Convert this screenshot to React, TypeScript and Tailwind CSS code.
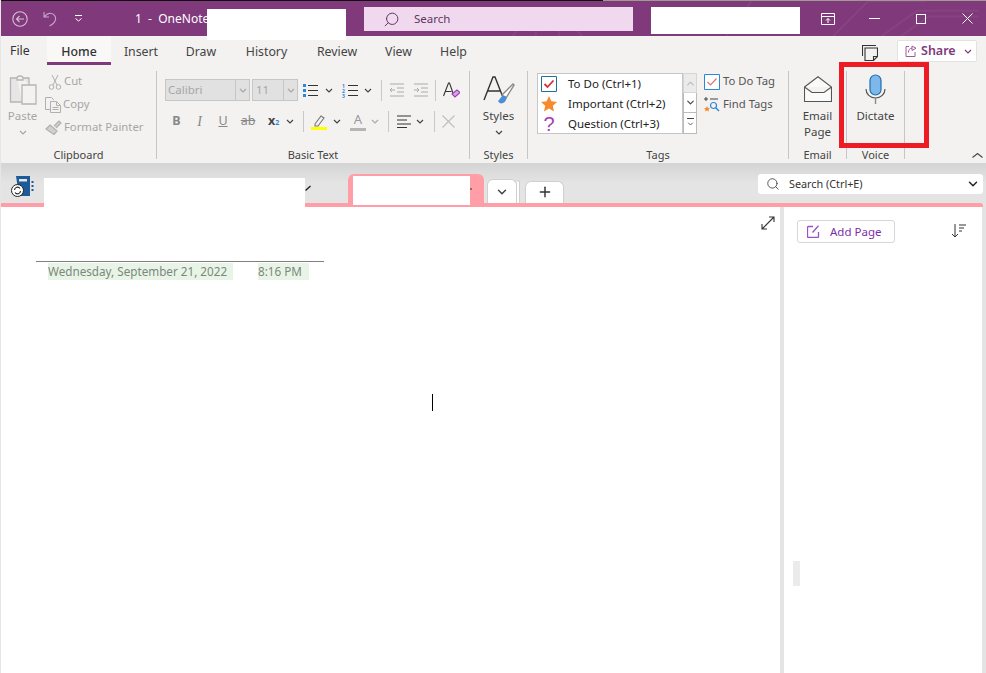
import { ChevronDown, ChevronUp, Search, Plus } from "lucide-react";

function Chev({ className = "" }: { className?: string }) {
  return (
    <svg viewBox="0 0 8 5" className={`w-[8px] h-[5px] shrink-0 ${className}`} fill="none" stroke="currentColor" strokeWidth="1.2">
      <path d="M1 1l3 3 3-3" />
    </svg>
  );
}

function Sep({ className = "" }: { className?: string }) {
  return <div className={`w-px h-[21px] bg-[#c8c8c8] shrink-0 ${className}`} />;
}

function Group({ label, width, children }: { label: string; width: string; children: React.ReactNode }) {
  return (
    <div className={`flex flex-col h-[88px] border-r border-[#c6c6c6] shrink-0 ${width}`}>
      <div className="flex-1 min-h-0">{children}</div>
      <div className="h-[14px] -mb-[3px] leading-[14px] text-center text-[11px] text-[#444]">{label}</div>
    </div>
  );
}

function SmallAction({ icon, label, iconClass, textClass = "text-[#a6a6a6]" }: { icon: React.ReactNode; label: string; iconClass: string; textClass?: string }) {
  return (
    <div className={`flex items-center h-[23px] text-[11.3px] whitespace-nowrap ${textClass}`}>
      <div className={iconClass}>{icon}</div>
      <span className="ml-[2px]">{label}</span>
    </div>
  );
}

export default function App() {
  return (
    <div className="relative w-[986px] h-[673px] overflow-hidden flex flex-col border-l border-[#e6e6e6] bg-white font-['Noto_Sans',sans-serif]">
      <div className="h-px shrink-0 flex">
        <div className="w-[602px] bg-[#111]" />
        <div className="flex-1 bg-[#a09a90]" />
      </div>
      {/* title bar */}
      <div className="relative h-[35px] shrink-0 flex items-center text-white bg-[#80397b]">
        <svg viewBox="0 0 500 36" className="absolute right-0 top-0 w-[500px] h-[35px]" fill="none" stroke="#874380" strokeWidth="2">
          <path d="M20 36l16-16h40l16 16M240 36l26-36M350 36l36-36h60M400 36l36-26h64M420 36l28-20h52" />
          <circle cx="56" cy="34" r="12" />
        </svg>
        <svg viewBox="0 0 16 16" className="relative w-[16px] h-[16px] ml-[11px]" fill="none" stroke="#d9bfd7" strokeWidth="1.1">
          <circle cx="8" cy="8" r="7.2" />
          <path d="M12 8H4.500M7.500 5L4.500 8l3 3" />
        </svg>
        <svg viewBox="0 0 14 16" className="relative w-[14px] h-[16px] ml-[15px]" fill="none" stroke="#c9a5c6" strokeWidth="1.1">
          <path d="M1 1v5h5M1.200 6C3 3.500 5 2 7.500 2.200 10.500 2.500 13 5 12.600 8.300 12.200 11 10 13 6.500 15" />
        </svg>
        <svg viewBox="0 0 9 7" className="relative w-[9px] h-[7px] ml-[17px]" fill="none" stroke="#fff" strokeWidth="1">
          <path d="M1 .5h7M1.500 3.500L4.500 6l3-2.500" />
        </svg>
        <div className="relative w-[72px] ml-[52px] text-[12px] whitespace-pre">1  -  OneNote</div>
        <div className="relative self-start mt-[8px] w-[139px] h-[31px] bg-white" />
        <div className="relative self-start mt-[6px] ml-[18px] w-[269px] h-[24px] flex items-center bg-[#f0d9ee] text-[#5e3a5c] text-[11.5px]">
          <Search className="w-[17px] h-[17px] ml-[19px] -scale-x-100" strokeWidth={1.4} />
          <span className="ml-[14px]">Search</span>
        </div>
        <div className="relative self-start mt-[6px] ml-[18px] w-[149px] h-[27px] bg-white" />
        <svg viewBox="0 0 14 12" className="relative w-[14px] h-[12px] ml-[21px]" fill="none" stroke="#fff" strokeWidth="1">
          <path d="M.5.5h13v11H.5zM.5 3.500h13M7 10V5.500M5 7.500l2-2 2 2" />
        </svg>
        <div className="relative w-[11px] h-px bg-white ml-[34px]" />
        <div className="relative w-[10px] h-[10px] border border-white ml-[36px]" />
        <svg viewBox="0 0 11 11" className="relative w-[11px] h-[11px] ml-[36px]" fill="none" stroke="#fff" strokeWidth="1">
          <path d="M.5.5l10 10M10.500.5l-10 10" />
        </svg>
      </div>

      {/* ribbon tabs */}
      <div className="h-[29px] shrink-0 flex bg-[#f3f2f1] text-[12.3px] text-[#444]">
        <div className="w-[46px] pl-[9px] pt-[6px] text-[#333]">File</div>
        <div className="w-[64px] text-center pt-[7px] bg-[#f9f8f7] border-b-[3px] border-[#80397b] font-medium text-[#333]">Home</div>
        <div className="w-[60px] text-center pt-[7px]">Insert</div>
        <div className="w-[60px] text-center pt-[7px]">Draw</div>
        <div className="w-[71px] text-center pt-[7px]">History</div>
        <div className="w-[70px] text-center pt-[7px]">Review</div>
        <div className="w-[53px] text-center pt-[7px]">View</div>
        <div className="w-[57px] text-center pt-[7px]">Help</div>
        <div className="flex-1" />
        <svg viewBox="0 0 16 16" className="w-[16px] h-[16px] mt-[9px]" fill="none" stroke="#333" strokeWidth="1.1">
          <path d="M.5 11V.5H14M3 3h12.500v8.500l-4 4H3zM11.500 15.500v-4h4" />
        </svg>
        <div className="ml-[19px] mr-[9px] mt-[4px] w-[80px] h-[22px] flex items-center bg-white border border-[#e2e2e2] rounded-[2px] text-[#80397b] text-[12.5px] font-semibold">
          <svg viewBox="0 0 12 12" className="w-[12px] h-[12px] ml-[7px]" fill="none" stroke="#a05a9b" strokeWidth="1">
            <path d="M4 1.500H1v10h9V7M7 1v4.500M7 1l4 2.200L7 5.500M7 3.200C4.500 3.200 3.500 5 3.500 7.500" />
          </svg>
          <span className="ml-[4px] pt-px">Share</span>
          <Chev className="ml-[8px] text-[#80397b]" />
        </div>
      </div>

      {/* ribbon */}
      <div className="h-[98px] shrink-0 flex pt-[6px] bg-[#f3f2f1]">
        <Group label="Clipboard" width="w-[156px]">
          <div className="flex">
            <div className="ml-[7px] w-[29px] mt-[4px] flex flex-col items-center text-[#a6a6a6]">
              <svg viewBox="0 0 28 30" className="w-[28px] h-[30px]" fill="none" stroke="#b5b5b5" strokeWidth="1.3">
                <path d="M8 3H1.500v24H13M20 10V3h-6" fill="#e6e6e6" />
                <path d="M8 3c0-1 1-2 3-2s3 1 3 2v2H8z" />
                <path d="M13 10h14v19H13z" fill="#f3f2f1" />
              </svg>
              <div className="mt-[5px] h-[12px] leading-[12px] text-[11.5px]">Paste</div>
              <Chev className="mt-[8px]" />
            </div>
            <div className="ml-[11px] -mt-px">
              <SmallAction
                label="Cut"
                iconClass="w-[14px]"
                icon={
                  <svg viewBox="0 0 14 16" className="w-[14px] h-[16px]" fill="none" stroke="#b0b0b0" strokeWidth="1">
                    <path d="M4 1l5 10M10 1L5 11" />
                    <circle cx="3.500" cy="13" r="2.300" />
                    <circle cx="10.500" cy="13" r="2.300" />
                  </svg>
                }
              />
              <SmallAction
                label="Copy"
                iconClass="w-[16px] -ml-[3px]"
                icon={
                  <svg viewBox="0 0 16 16" className="w-[16px] h-[16px]" fill="none" stroke="#b0b0b0" strokeWidth="1">
                    <path d="M5 12.500H.5V.5h6L9 3M5.500 4.500h6l4 4v7h-10zM11.500 4.500v4h4M7.500 10.500h6M7.500 12.500h6" />
                  </svg>
                }
              />
              <SmallAction
                label="Format Painter"
                iconClass="w-[17px] -ml-[3px]"
                icon={
                  <svg viewBox="0 0 17 15" className="w-[17px] h-[15px]" fill="none" stroke="#b0b0b0" strokeWidth="1.2">
                    <path d="M9 6l5-5 2 2-5 5M5 5l7 6-3 3.500-8-5.500z" fill="#d0d0d0" />
                  </svg>
                }
              />
            </div>
          </div>
        </Group>

        <Group label="Basic Text" width="w-[313px]">
          <div className="flex items-center mt-[8px] h-[22px] text-[#444]">
            <div className="ml-[8px] w-[85px] h-[22px] flex bg-[#e1e1e1] border border-[#c6c6c6] text-[#a6a6a6] text-[11.5px] leading-[20px]">
              <span className="flex-1 pl-[2px]">Calibri</span>
              <div className="w-[14px] border-l border-[#c6c6c6] flex items-center justify-center"><Chev /></div>
            </div>
            <div className="ml-[2px] w-[46px] h-[22px] flex bg-[#e1e1e1] border border-[#c6c6c6] text-[#a6a6a6] text-[11.5px] leading-[20px]">
              <span className="flex-1 pl-[3px]">11</span>
              <div className="w-[14px] border-l border-[#c6c6c6] flex items-center justify-center"><Chev /></div>
            </div>
            <svg viewBox="0 0 15 14" className="ml-[5px] w-[15px] h-[14px]" fill="none" stroke="#333" strokeWidth="1">
              <path d="M5 2.500h10M5 7.500h10M5 12.500h10" />
              <path d="M0 1h3v3H0zM0 6h3v3H0zM0 11h3v3H0z" fill="#2b88d8" stroke="none" />
            </svg>
            <Chev className="ml-[7px]" />
            <svg viewBox="0 0 17 15" className="ml-[8px] w-[17px] h-[15px]" fill="none" stroke="#333" strokeWidth="1">
              <path d="M7 2.500h10M7 7.500h10M7 12.500h10" />
              <text x="1" y="4.500" fontSize="5" fontWeight="700" fill="#2b88d8" stroke="none">1</text>
              <text x="1" y="9.500" fontSize="5" fontWeight="700" fill="#2b88d8" stroke="none">2</text>
              <text x="1" y="14.500" fontSize="5" fontWeight="700" fill="#2b88d8" stroke="none">3</text>
            </svg>
            <Chev className="ml-[6px]" />
            <Sep className="ml-[9px]" />
            <svg viewBox="0 0 15 14" className="ml-[7px] w-[15px] h-[14px]" fill="none" stroke="#aaa" strokeWidth="1">
              <path d="M1 1h14M8 5h7M8 9h7M1 13h14M6 7H1M3 5L1 7l2 2" />
            </svg>
            <svg viewBox="0 0 15 14" className="ml-[9px] w-[15px] h-[14px]" fill="none" stroke="#aaa" strokeWidth="1">
              <path d="M1 1h14M8 5h7M8 9h7M1 13h14M1 7h5M4 5l2 2-2 2" />
            </svg>
            <Sep className="ml-[7px]" />
            <svg viewBox="0 0 17 17" className="ml-[7px] w-[17px] h-[17px]" fill="none" strokeWidth="1.1">
              <path d="M.5 14L5.500 1h1L10 11M2.500 9.500h6" stroke="#333" />
              <path d="M9 12l5-4 3 2.500-5 4.500z" fill="#d9a6e5" stroke="#9b3fb5" />
            </svg>
          </div>
          <div className="flex items-center mt-[9px] h-[23px] text-[#888] text-[12.5px]">
            <div className="ml-[12px] w-[15px] text-center font-bold">B</div>
            <div className="ml-[8px] w-[15px] text-center italic font-['Liberation_Serif',serif] text-[14px]">I</div>
            <div className="ml-[8px] w-[16px] text-center underline">U</div>
            <div className="ml-[9px] w-[16px] text-center line-through">ab</div>
            <div className="ml-[12px] w-[10px] font-bold text-[#444] leading-none whitespace-nowrap">
              x<span className="text-[7px] text-[#2b88d8]">2</span>
            </div>
            <Chev className="ml-[8px] text-[#444]" />
            <Sep className="ml-[9px]" />
            <svg viewBox="0 0 16 16" className="ml-[7px] w-[16px] h-[16px]" fill="none" stroke="#777" strokeWidth="1.1">
              <path d="M4 10l6-8 3 2-6 8H4z" />
              <path d="M0 13h16v3H0z" fill="#ffff00" stroke="none" />
            </svg>
            <Chev className="ml-[6px] text-[#444]" />
            <div className="ml-[9px] w-[16px] h-[20px] flex flex-col items-center">
              <span className="h-[15px] leading-[15px] text-[13px] text-[#999]">A</span>
              <div className="w-[16px] h-[3px] mt-[1px] bg-[#b5b5b5]" />
            </div>
            <Chev className="ml-[5px] text-[#aaa]" />
            <Sep className="ml-[9px]" />
            <svg viewBox="0 0 14 13" className="ml-[8px] w-[14px] h-[13px]" fill="none" stroke="#333" strokeWidth="1">
              <path d="M0 1h14M0 5h10M0 9h14M0 12.500h10" />
            </svg>
            <Chev className="ml-[5px] text-[#444]" />
            <Sep className="ml-[10px]" />
            <svg viewBox="0 0 13 13" className="ml-[7px] w-[13px] h-[13px]" fill="none" stroke="#bdbdbd" strokeWidth="1.1">
              <path d="M.5.5l12 12M12.500.5l-12 12" />
            </svg>
          </div>
        </Group>

        <Group label="Styles" width="w-[58px]">
          <div className="flex flex-col items-center mt-[5px] text-[#444]">
            <svg viewBox="0 0 32 30" className="w-[32px] h-[30px] ml-[1px]" fill="none" strokeWidth="1.400">
              <path d="M1 24L10 1h2l9 23M5 15h12" stroke="#333" />
              <path d="M19 19L30 8l1 1-8 13z" stroke="#888" fill="#fff" />
              <path d="M15 25c2-1 3-6 7-5 3 1 1 6-2 7-2 1-4 0-5-2z" fill="#4a90d9" />
            </svg>
            <div className="mt-[4px] h-[12px] leading-[12px] text-[11.5px]">Styles</div>
            <Chev className="mt-[8px]" />
          </div>
        </Group>

        <Group label="Tags" width="w-[261px]">
          <div className="flex mt-[2px]">
            <div className="ml-[9px] w-[146px] h-[61px] bg-white border border-[#c6c6c6] text-[11.5px] text-[#222]">
              <div className="flex items-center h-[20px] pl-[3px]">
                <svg viewBox="0 0 16 16" className="w-[16px] h-[16px]" fill="none">
                  <path d="M.5.5h15v15H.5z" stroke="#1f6f9f" />
                  <path d="M3.500 8l3 3 6-6.500" stroke="#d13438" strokeWidth="1.800" />
                </svg>
                <span className="ml-[11px]">To Do (Ctrl+1)</span>
              </div>
              <div className="flex items-center h-[20px] pl-[3px]">
                <svg viewBox="0 0 16 16" className="w-[16px] h-[16px]">
                  <path d="M8 0l2.400 5.300 5.600.6-4.200 3.800 1.200 5.700L8 12.500l-5 2.900 1.200-5.700L0 5.900l5.600-.6z" fill="#f58b2c" />
                </svg>
                <span className="ml-[11px]">Important (Ctrl+2)</span>
              </div>
              <div className="flex items-center h-[19px] pl-[3px]">
                <span className="w-[16px] text-center text-[#a53bb5] text-[20px] font-['Liberation_Sans',sans-serif] font-light leading-none">?</span>
                <span className="ml-[11px]">Question (Ctrl+3)</span>
              </div>
            </div>
            <div className="w-[14px] h-[61px] flex flex-col text-[#444]">
              <div className="h-[20px] bg-[#ebebeb] border border-[#d6d6d6] flex items-center justify-center text-[#bbb]"><ChevronUp className="w-[11px] h-[11px]" strokeWidth={2.5} /></div>
              <div className="h-[20px] bg-white border-x border-[#bbb] border-b flex items-center justify-center"><ChevronDown className="w-[11px] h-[11px]" strokeWidth={2.5} /></div>
              <div className="h-[21px] bg-white border-x border-b border-[#bbb] flex flex-col items-center justify-center">
                <div className="w-[7px] h-px bg-[#444] mb-px" />
                <ChevronDown className="w-[11px] h-[8px]" strokeWidth={2.5} />
              </div>
            </div>
            <div className="ml-[7px] -mt-[3px]">
              <SmallAction
                label="To Do Tag"
                iconClass="w-[16px] mr-px"
                textClass="text-[#555]"
                icon={
                  <svg viewBox="0 0 16 16" className="w-[16px] h-[16px]" fill="none">
                    <path d="M.5.5h15v15H.5z" stroke="#2b88d8" fill="#fff" />
                    <path d="M3.500 8l3 3 6-6.500" stroke="#e8706f" strokeWidth="1.200" />
                  </svg>
                }
              />
              <SmallAction
                label="Find Tags"
                iconClass="w-[16px] mr-px"
                textClass="text-[#555]"
                icon={
                  <svg viewBox="0 0 16 16" className="w-[16px] h-[16px]" fill="none">
                    <path d="M1 1h2v2H1zM6 2h8" stroke="#444" />
                    <path d="M3 9l1 2h2l-1.500 1.500.5 2-2-1-2 1 .5-2L0 11h2z" fill="#f58b2c" />
                    <circle cx="9.500" cy="8.500" r="3" stroke="#2b88d8" strokeWidth="1.200" />
                    <path d="M12 11l3 3" stroke="#2b88d8" strokeWidth="1.400" />
                  </svg>
                }
              />
            </div>
          </div>
        </Group>

        <Group label="Email" width="w-[58px]">
          <div className="flex flex-col items-center mt-[5px] text-[#444] text-[11.5px] leading-[16px]">
            <svg viewBox="0 0 28 26" className="w-[28px] h-[26px]" fill="#fafafa" stroke="#555" strokeWidth="1.100">
              <path d="M.5 11L14 .8 27.500 11v14.500H.5zM.5 11l7.500 5.500h12L27.500 11" />
            </svg>
            <div className="mt-[6px]">Email</div>
            <div>Page</div>
          </div>
        </Group>

        <Group label="Voice" width="w-[58px]">
          <div className="flex flex-col items-center mt-[3px] text-[#444] text-[11.5px] leading-[16px]">
            <svg viewBox="0 0 21 30" className="w-[21px] h-[30px]" fill="none">
              <rect x="5" y="1" width="11" height="20" rx="5.500" fill="#7cb8ea" stroke="#1f6fb2" strokeWidth="1.200" />
              <path d="M1 15c0 5 4 9 9.500 9s9.500-4 9.500-9" stroke="#555" strokeWidth="1.200" />
              <path d="M10.500 24v6" stroke="#888" strokeWidth="1.400" />
            </svg>
            <div className="mt-[4px]">Dictate</div>
          </div>
        </Group>

        <div className="flex-1 flex justify-end items-end pr-[3px] pb-[5px]">
          <svg viewBox="0 0 11 5" className="w-[11px] h-[5px]" fill="none" stroke="#444" strokeWidth="1.100">
            <path d="M.5 4.500l5-4 5 4" />
          </svg>
        </div>
      </div>

      {/* section tabs */}
      <div className="shrink-0 bg-[#e4e4e4]">
        <div className="relative z-10 h-[40px] flex bg-gradient-to-b from-[#d4d4d4] via-[#e4e4e4] to-[#e4e4e4]">
          <svg viewBox="0 0 24 21" className="ml-[10px] mt-[13px] w-[24px] h-[21px]" fill="none">
            <path d="M5 0h14v20H8z" fill="#1d5a96" />
            <path d="M8 3h8v2.500H8z" fill="#dce8f3" />
            <path d="M20.500 5h2v2h-2zM20.500 9h2v2h-2zM20.500 13h2v2h-2z" fill="#1d5a96" />
            <circle cx="6.500" cy="14.500" r="6" fill="#fff" stroke="#222" />
            <path d="M3.500 14a3 3 0 0 1 5.500-1.500M9.500 15a3 3 0 0 1-5.500 1.500" stroke="#222" strokeWidth="1.100" />
          </svg>
          <div className="ml-[9px] mt-[15px] w-[261px] h-[29px] bg-white shrink-0" />
          <svg viewBox="0 0 6 6" className="mt-[22px] w-[6px] h-[6px]" fill="none" stroke="#222" strokeWidth="1.400">
            <path d="M0.500 5.500L5.500 1" />
          </svg>
          <div className="ml-[37px] mt-[11px] w-[136px] h-[33px] pl-[5px] pt-[2px] bg-[#ff9ea6] rounded-t-[6px] flex shrink-0">
            <div className="w-[117px] h-[29px] bg-white" />
            <div className="w-[2px] h-[2px] mt-[12px] bg-[#777]" />
          </div>
          <div className="ml-[3px] mt-[16px] w-[33px] h-[24px] flex">
            <div className="w-[31px] h-[24px] bg-white border border-b-0 border-[#d0d0d0] rounded-t-[6px] flex justify-center pt-[5px] text-[#444]">
              <ChevronDown className="w-[14px] h-[14px]" strokeWidth={2.5} />
            </div>
            <div className="w-[3px] h-[23px] mt-px bg-white border-r border-t border-[#d0d0d0] rounded-tr-[4px]" />
          </div>
          <div className="ml-[5px] mt-[18px] w-[39px] h-[22px] bg-white border border-b-0 border-[#d0d0d0] rounded-t-[6px] flex justify-center pt-[2px] text-[#333]">
            <Plus className="w-[16px] h-[16px]" strokeWidth={2.2} />
          </div>
          <div className="flex-1" />
          <div className="mr-[3px] mt-[11px] w-[225px] h-[20px] flex items-center bg-white rounded-[3px] text-[10.8px] text-[#333]">
            <Search className="w-[14px] h-[14px] ml-[8px] text-[#444]" strokeWidth={1.5} />
            <span className="ml-[9px]">Search (Ctrl+E)</span>
            <ChevronDown className="ml-auto mr-[3px] w-[14px] h-[14px] text-[#222]" strokeWidth={2.5} />
          </div>
        </div>
        <div className="h-[4px] mr-[3px] bg-[#ff9ea6] rounded-tr-[3px]" />
      </div>

      {/* page area */}
      <div className="flex-1 min-h-0 flex">
        <div className="w-[779px] shrink-0 flex flex-col">
          <div className="flex justify-end pr-[5px] pt-[9px]">
            <svg viewBox="0 0 14 14" className="w-[14px] h-[14px]" fill="none" stroke="#333" strokeWidth="1.100">
              <path d="M1 13L13 1M8 1h5v5M1 8v5h5" />
            </svg>
          </div>
          <div className="ml-[35px] mt-[31px] w-[288px] h-px bg-[#808080]" />
          <div className="ml-[47px] mt-px flex text-[11.7px] leading-[17px] text-[#7d8680]">
            <div className="w-[185px] bg-[#e8f5e6] whitespace-nowrap">Wednesday, September 21, 2022</div>
            <div className="ml-[25px] w-[51px] bg-[#e8f5e6] whitespace-nowrap">8:16 PM</div>
          </div>
          <div className="ml-[431px] mt-[114px] w-px h-[17px] bg-black" />
        </div>
        <div className="w-[4px] bg-[#e4e4e4] shrink-0" />
        <div className="w-[198px] shrink-0 flex flex-col">
          <div className="flex items-start justify-between pl-[13px] pr-[16px] pt-[13px]">
            <div className="w-[98px] h-[23px] flex items-center border border-[#d6d6d6] rounded-[3px] text-[11.5px] text-[#7b2fa8]">
              <svg viewBox="0 0 13 13" className="ml-[9px] w-[13px] h-[13px]" fill="none" stroke="#9b4fc4" strokeWidth="1.300">
                <path d="M6 1.500H1.500a1 1 0 0 0-1 1v9a1 1 0 0 0 1 1h9a1 1 0 0 0 1-1V7M5.500 7.500L11.500 .8" />
              </svg>
              <span className="ml-[10px] whitespace-nowrap">Add Page</span>
            </div>
            <svg viewBox="0 0 15 14" className="mt-[4px] w-[15px] h-[14px]" fill="none" stroke="#333" strokeWidth="1">
              <path d="M4 0v13M1 10l3 3 3-3M8 1h7M8 4h5M8 7h3" />
            </svg>
          </div>
          <div className="ml-[9px] mt-[318px] w-[7px] h-[25px] bg-[#ebebeb] rounded-l-[1px]" />
        </div>
        <div className="flex-1 bg-[#e4e4e4]" />
      </div>

      {/* highlight box */}
      <div className="absolute left-[838px] top-[62px] w-[90px] h-[86px] border-[5px] border-[#ed1c24] pointer-events-none" />
    </div>
  );
}
